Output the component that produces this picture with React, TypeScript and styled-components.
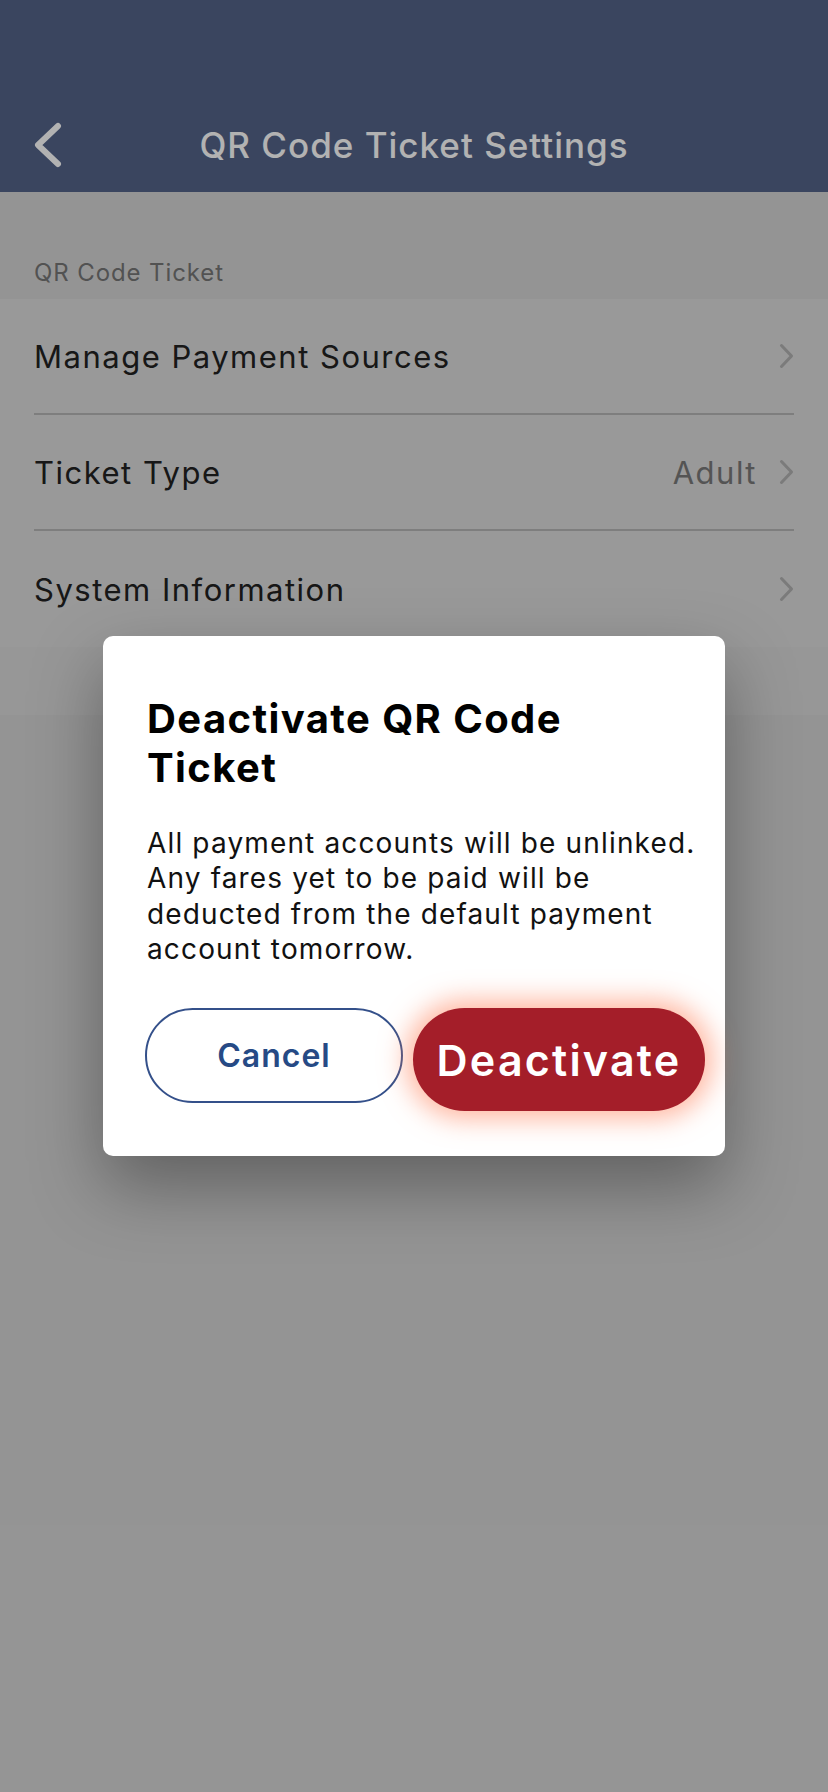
import { ReactElement } from "react";
import styled, { createGlobalStyle } from "styled-components";

const GlobalStyle = createGlobalStyle`
  html, body {
    margin: 0;
    padding: 0;
    background: #d5d5d5;
  }
  * {
    box-sizing: border-box;
  }
`;

interface IRow {
  label: string;
  value?: string;
}

const rows: IRow[] = [
  { label: "Manage Payment Sources" },
  { label: "Ticket Type", value: "Adult" },
  { label: "System Information" },
];

const BackIcon = () => (
  <svg width='30' height='46' viewBox='0 0 30 46' fill='none'>
    <polyline
      points='25,4 5,23 25,42'
      stroke='#ffffff'
      strokeWidth='6'
      strokeLinecap='round'
      strokeLinejoin='round'
    />
  </svg>
);

const Chevron = () => (
  <svg width='15' height='26' viewBox='0 0 15 26' fill='none'>
    <polyline
      points='2.5,2.5 12.5,13 2.5,23.5'
      stroke='#b0b0b0'
      strokeWidth='3'
      strokeLinecap='round'
      strokeLinejoin='round'
    />
  </svg>
);

export default function App(): ReactElement {
  return (
    <Page>
      <GlobalStyle />
      <Header>
        <NavBar>
          <BackButton>
            <BackIcon />
          </BackButton>
          <NavTitle>QR Code Ticket Settings</NavTitle>
        </NavBar>
      </Header>

      <SectionHeader>QR Code Ticket</SectionHeader>
      <List>
        {rows.map((row, i) => (
          <Row key={row.label} last={i === rows.length - 1}>
            <RowLabel>{row.label}</RowLabel>
            <RowRight>
              {row.value && <RowValue>{row.value}</RowValue>}
              <Chevron />
            </RowRight>
          </Row>
        ))}
      </List>
      <SectionFooter />

      <Backdrop>
        <Dialog>
          <DialogTitle>Deactivate QR Code Ticket</DialogTitle>
          <DialogText>
            All payment accounts will be unlinked. Any fares yet to be paid
            will be deducted from the default payment account tomorrow.
          </DialogText>
          <ButtonRow>
            <CancelButton>Cancel</CancelButton>
            <DangerButton>Deactivate</DangerButton>
          </ButtonRow>
        </Dialog>
      </Backdrop>
    </Page>
  );
}

const Page = styled.div`
  position: relative;
  min-height: 1792px;
  background: #d5d5d5;
  font-family: Inter, "Noto Sans", "Liberation Sans", sans-serif;
  overflow: hidden;
`;

const Header = styled.header`
  height: 192px;
  background: #536389;
  display: flex;
  flex-direction: column;
  justify-content: flex-end;
`;

const NavBar = styled.div`
  position: relative;
  height: 94px;
  display: flex;
  align-items: center;
  justify-content: center;
`;

const BackButton = styled.div`
  position: absolute;
  left: 33px;
  top: 24px;
  display: flex;
`;

const NavTitle = styled.h1`
  margin: 0;
  font-size: 35px;
  font-weight: 500;
  color: #ffffff;
  letter-spacing: 1px;
`;

const SectionHeader = styled.div`
  height: 107px;
  padding: 0 34px 11px;
  display: flex;
  align-items: flex-end;
  font-size: 24px;
  line-height: 30px;
  letter-spacing: 0.9px;
  color: #767676;
`;

const List = styled.div`
  background: #dbdbdb;
  padding: 0 34px;
`;

const Row = styled.div<{ last?: boolean }>`
  height: 116px;
  display: flex;
  align-items: center;
  justify-content: space-between;
  border-bottom: ${(p) => (p.last ? "none" : "2px solid #b5b5b5")};
`;

const RowLabel = styled.span`
  font-size: 31px;
  letter-spacing: 1.5px;
  color: #222222;
`;

const RowRight = styled.div`
  display: flex;
  align-items: center;
  gap: 22px;
`;

const RowValue = styled.span`
  font-size: 31px;
  letter-spacing: 1.5px;
  color: #797979;
`;

const SectionFooter = styled.div`
  height: 68px;
  background: #d9d9d9;
`;

const Backdrop = styled.div`
  position: absolute;
  inset: 0;
  background: rgba(0, 0, 0, 0.3);
  display: flex;
  align-items: center;
  justify-content: center;
`;

const Dialog = styled.div`
  width: 622px;
  background: #ffffff;
  border-radius: 10px;
  padding: 58px 14px 45px 44px;
  box-shadow: 0 30px 70px rgba(0, 0, 0, 0.35);
`;

const DialogTitle = styled.h2`
  margin: 0;
  max-width: 480px;
  font-size: 40px;
  line-height: 49px;
  font-weight: 700;
  letter-spacing: 1.4px;
  color: #000000;
`;

const DialogText = styled.p`
  margin: 34px 0 0;
  font-size: 28px;
  line-height: 35.4px;
  letter-spacing: 1.15px;
  color: #111111;
`;

const ButtonRow = styled.div`
  margin: 41px 0 0 -2px;
  display: flex;
  align-items: flex-start;
  gap: 10px;
`;

const CancelButton = styled.button`
  width: 258px;
  height: 95px;
  border-radius: 48px;
  border: 2px solid #34508a;
  background: #ffffff;
  color: #264a85;
  font-family: inherit;
  font-size: 32px;
  font-weight: 600;
  letter-spacing: 1px;
`;

const DangerButton = styled.button`
  width: 292px;
  height: 103px;
  border-radius: 52px;
  border: none;
  background: #a41e29;
  color: #ffffff;
  font-family: inherit;
  font-size: 43px;
  font-weight: 600;
  letter-spacing: 2.2px;
  box-shadow: 0 0 26px 8px rgba(255, 125, 85, 0.55);
`;
